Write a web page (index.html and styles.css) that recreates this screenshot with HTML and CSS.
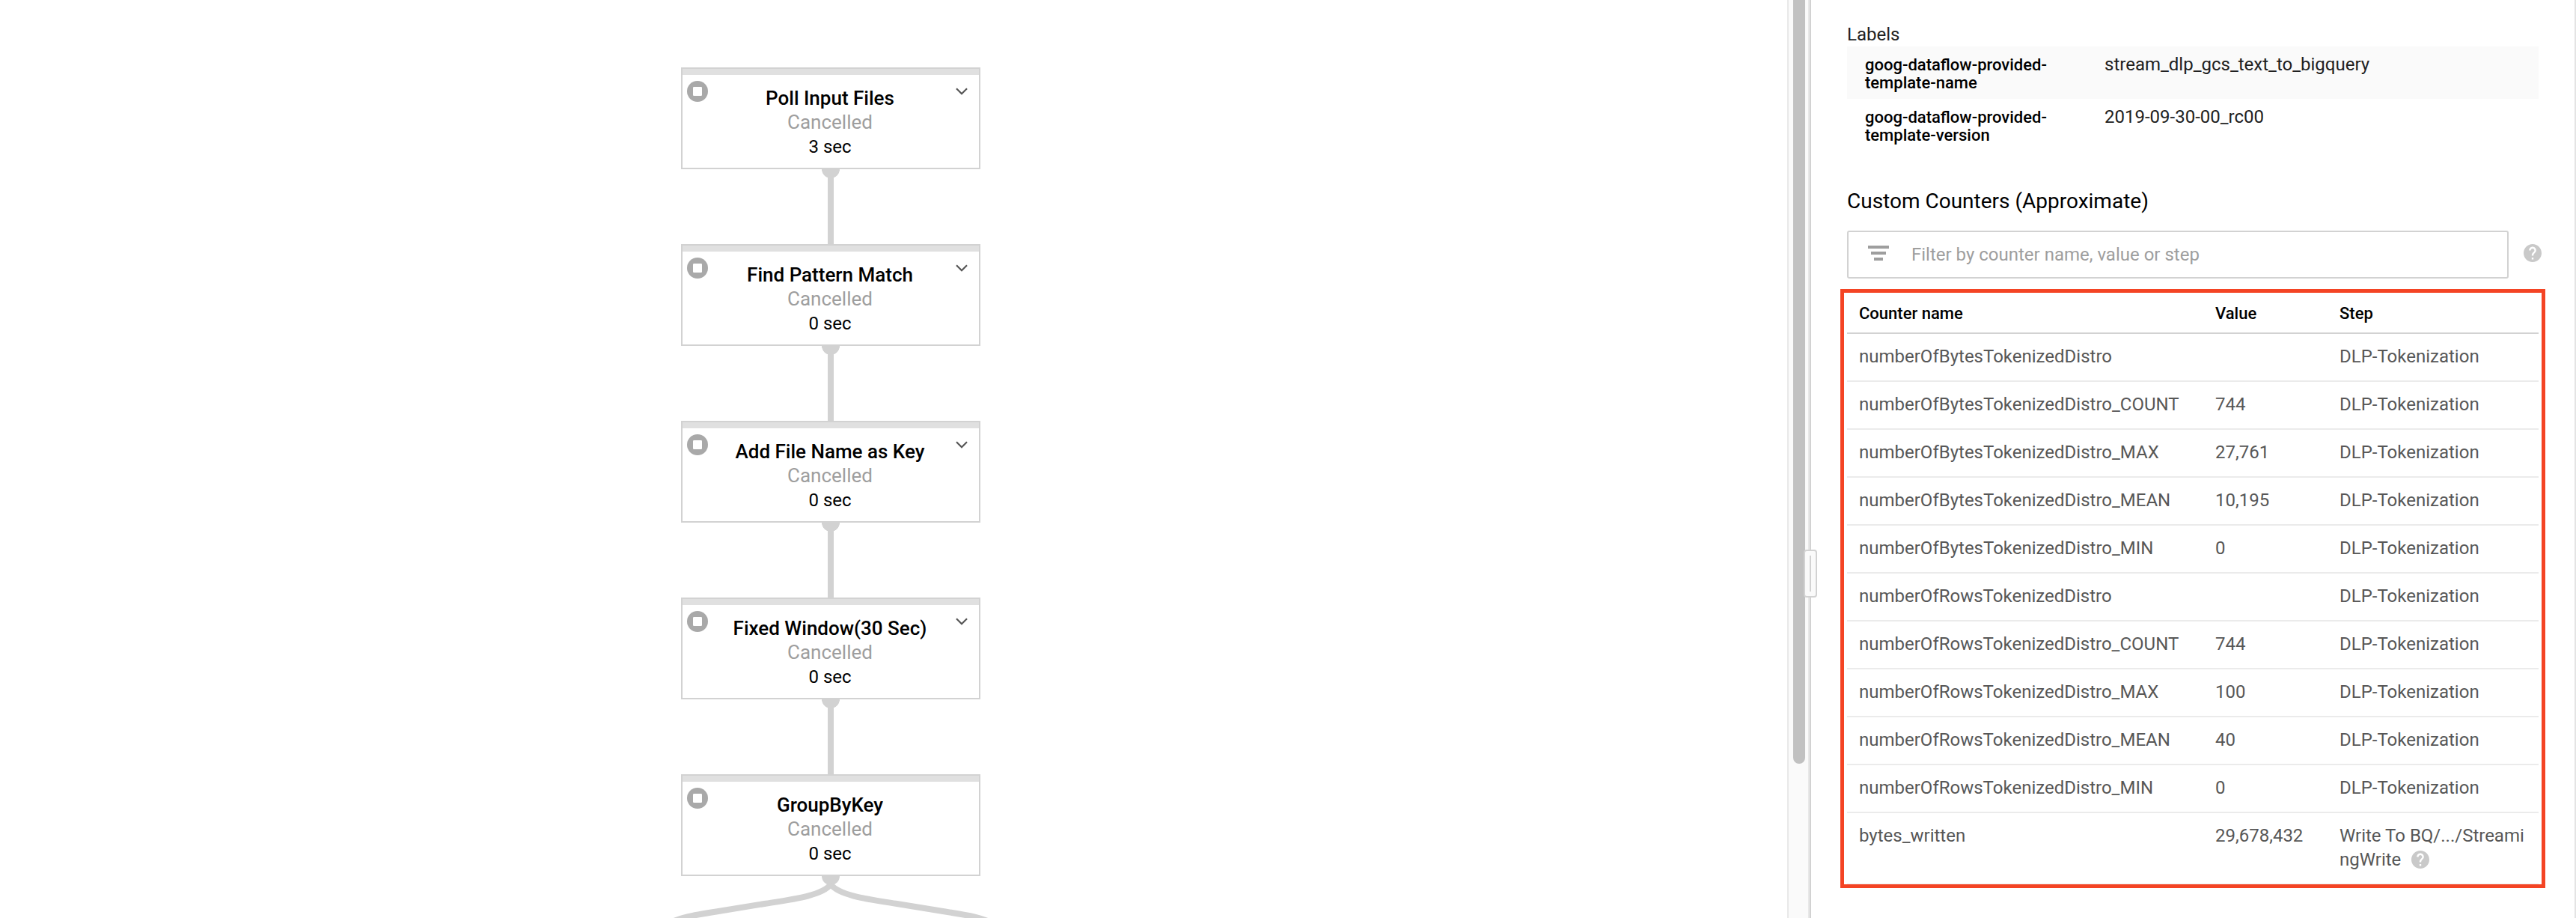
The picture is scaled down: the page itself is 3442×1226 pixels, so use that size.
FILE: index.html
```html
<!DOCTYPE html>
<html lang="en">
<head>
<meta charset="utf-8">
<title>Dataflow job</title>
<link rel="stylesheet" href="styles.css">
</head>
<body>
<svg class="defs" width="0" height="0" aria-hidden="true">
  <symbol id="stopped" viewBox="0 0 28 28"><circle cx="14" cy="14" r="14" fill="#a9a9a9"/><rect x="8" y="8" width="12" height="12" rx="1.3" fill="#fff"/></symbol>
  <symbol id="chevron" viewBox="0 0 16 10"><path d="M1 1.3 8 8.2 15 1.3" fill="none" stroke="#555" stroke-width="2.2"/></symbol>
  <symbol id="help" viewBox="2 2 20 20"><path fill="#c9c9c9" d="M12 2C6.48 2 2 6.48 2 12s4.48 10 10 10 10-4.48 10-10S17.52 2 12 2zm1 17h-2v-2h2v2zm2.07-7.75l-.9.92C13.45 12.9 13 13.5 13 15h-2v-.5c0-1.1.45-2.1 1.17-2.83l1.24-1.26c.37-.36.59-.86.59-1.41 0-1.1-.9-2-2-2s-2 .9-2 2H8c0-2.21 1.79-4 4-4s4 1.79 4 4c0 .88-.36 1.68-.93 2.25z"/></symbol>
</svg>
<div class="app">
  <main class="graph">
    <section class="node"><svg class="status"><use href="#stopped"/></svg><div class="info"><h3>Poll Input Files</h3><p class="state">Cancelled</p><p class="time">3 sec</p></div><svg class="chevron"><use href="#chevron"/></svg></section>
    <div class="link"></div>
    <section class="node"><svg class="status"><use href="#stopped"/></svg><div class="info"><h3>Find Pattern Match</h3><p class="state">Cancelled</p><p class="time">0 sec</p></div><svg class="chevron"><use href="#chevron"/></svg></section>
    <div class="link"></div>
    <section class="node"><svg class="status"><use href="#stopped"/></svg><div class="info"><h3>Add File Name as Key</h3><p class="state">Cancelled</p><p class="time">0 sec</p></div><svg class="chevron"><use href="#chevron"/></svg></section>
    <div class="link"></div>
    <section class="node"><svg class="status"><use href="#stopped"/></svg><div class="info"><h3>Fixed Window(30 Sec)</h3><p class="state">Cancelled</p><p class="time">0 sec</p></div><svg class="chevron"><use href="#chevron"/></svg></section>
    <div class="link"></div>
    <section class="node"><svg class="status"><use href="#stopped"/></svg><div class="info"><h3>GroupByKey</h3><p class="state">Cancelled</p><p class="time">0 sec</p></div></section>
    <svg class="fork" width="460" height="56" viewBox="880 1170 460 56">
      <path d="M1098 1170a12 12 0 0 0 24 0z" fill="#d2d2d2"/>
      <path d="M1110 1181C1099 1196 1060 1201 1023 1206.7L957 1217.5C925 1222.5 905 1226 893 1234M1110 1181C1121 1196 1160 1201 1197 1206.7L1263 1217.5C1295 1222.5 1315 1226 1327 1234" fill="none" stroke="#d2d2d2" stroke-width="8"/>
    </svg>
  </main>
  <div class="scrollbar"><div class="thumb"></div></div>
  <div class="divider"><div class="handle"></div></div>
  <aside class="panel">
    <h4 class="labels-title">Labels</h4>
    <dl class="labels">
      <div class="label"><dt>goog-dataflow-provided-template-name</dt><dd>stream_dlp_gcs_text_to_bigquery</dd></div>
      <div class="label"><dt>goog-dataflow-provided-template-version</dt><dd>2019-09-30-00_rc00</dd></div>
    </dl>
    <h2 class="counters-title">Custom Counters (Approximate)</h2>
    <div class="filter-row">
      <div class="filter"><svg class="filter-icon" viewBox="0 0 28 20"><path d="M0 0h28v4H0zM4 8h20v4H4zM8 16h12v4H8z" fill="#9e9e9e"/></svg><span>Filter by counter name, value or step</span></div>
      <svg class="help"><use href="#help"/></svg>
    </div>
    <div class="highlight">
      <div class="table">
        <div class="row head"><span>Counter name</span><span>Value</span><span>Step</span></div>
        <div class="row"><span>numberOfBytesTokenizedDistro</span><span></span><span>DLP-Tokenization</span></div>
        <div class="row"><span>numberOfBytesTokenizedDistro_COUNT</span><span>744</span><span>DLP-Tokenization</span></div>
        <div class="row"><span>numberOfBytesTokenizedDistro_MAX</span><span>27,761</span><span>DLP-Tokenization</span></div>
        <div class="row"><span>numberOfBytesTokenizedDistro_MEAN</span><span>10,195</span><span>DLP-Tokenization</span></div>
        <div class="row"><span>numberOfBytesTokenizedDistro_MIN</span><span>0</span><span>DLP-Tokenization</span></div>
        <div class="row"><span>numberOfRowsTokenizedDistro</span><span></span><span>DLP-Tokenization</span></div>
        <div class="row"><span>numberOfRowsTokenizedDistro_COUNT</span><span>744</span><span>DLP-Tokenization</span></div>
        <div class="row"><span>numberOfRowsTokenizedDistro_MAX</span><span>100</span><span>DLP-Tokenization</span></div>
        <div class="row"><span>numberOfRowsTokenizedDistro_MEAN</span><span>40</span><span>DLP-Tokenization</span></div>
        <div class="row"><span>numberOfRowsTokenizedDistro_MIN</span><span>0</span><span>DLP-Tokenization</span></div>
        <div class="row last"><span>bytes_written</span><span>29,678,432</span><span>Write To BQ/.../Streami<br>ngWrite <svg class="help"><use href="#help"/></svg></span></div>
      </div>
    </div>
  </aside>
</div>
</body>
</html>
```

FILE: styles.css
```css
* { box-sizing: border-box; }
body { margin: 0; background: #fff; color: #000; font-family: Roboto, sans-serif; font-size: 24px; overflow: hidden; }
h2, h3, h4, p, dl, dd { margin: 0; }
svg { display: block; flex: none; }
.defs { position: absolute; }
.app { display: flex; width: 3442px; height: 1226px; overflow: hidden; }

.graph { display: flex; flex-direction: column; align-items: center; width: 2388px; padding: 90px 168px 0 0; flex: none; }
.node { display: grid; grid-template-columns: 28px 1fr 28px; width: 400px; height: 136px; flex: none; padding: 8px 8px 0 6px; border: 2px solid #d2d2d2; background: linear-gradient(#e0e0e0 8px, #fff 8px); }
.status { width: 28px; height: 28px; margin-top: 8px; }
.chevron { width: 16px; height: 10px; margin: 17px 0 0 5px; }
.info { padding-top: 15px; text-align: center; line-height: 32px; font-size: 26px; white-space: nowrap; }
.info h3 { font-size: 26px; font-weight: 500; }
.state { color: #9e9e9e; }
.time { padding-top: 1px; font-size: 24px; }
.link { flex: none; width: 24px; height: 100px; background: radial-gradient(circle at 12px 0, #d2d2d2 11.6px, transparent 12.2px), linear-gradient(#d2d2d2, #d2d2d2) 50% 0 / 8px 100% no-repeat; }
.fork { flex: none; }

.scrollbar { flex: none; width: 30px; padding-left: 6px; border: solid #e8e8e8; border-width: 0 2px; background: #fafafa; }
.thumb { width: 16px; height: 1020px; border-radius: 0 0 8px 8px; background: #c1c1c1; }
.divider { position: relative; flex: none; width: 2px; background: #d2d2d2; }
.handle { position: absolute; left: -8px; top: 734px; width: 18px; height: 64px; border: 2px solid #d2d2d2; border-radius: 4px; background: linear-gradient(#d2d2d2, #d2d2d2) 6px 6px / 2px 48px no-repeat #fafafa; }

.panel { flex: 1; padding: 30px 39px 0 39px; border-right: 2px solid #e4e4e4; color: #212121; }
.labels-title { padding-left: 9px; font-size: 24px; line-height: 32px; font-weight: 400; }
.labels { margin: 0 9px; }
.label { display: grid; grid-template-columns: 320px 1fr; height: 70px; padding: 11px 24px; line-height: 24px; }
.label:first-child { background: #fafafa; }
.label dt { width: 250px; padding-top: 2px; color: #000; font-size: 22px; font-weight: 500; }
.label dd { padding-top: 2px; line-height: 22px; }
.counters-title { margin: 51px 9px 0; font-size: 28px; font-weight: 400; line-height: 32px; color: #000; }
.filter-row { display: flex; align-items: center; justify-content: space-between; margin: 23px 5px 14px 9px; }
.filter { display: flex; align-items: center; width: 884px; height: 64px; padding: 0 26px; gap: 30px; border: 2px solid #d2d2d2; border-radius: 3px; color: #9e9e9e; }
.filter-icon { width: 28px; height: 20px; margin-top: -4px; }
.help { width: 24px; height: 24px; }
.filter-row .help { margin-top: -4px; }
.highlight { width: 942px; height: 800px; border: 5px solid #f44424; overflow: hidden; }
.table { margin: 0 4px; color: #575757; }
.row { display: grid; grid-template-columns: 476px 166px 1fr; height: 64px; padding: 14px 0 0 16px; border-bottom: 2px solid #ebebeb; line-height: 32px; white-space: nowrap; }
.row.head { height: 55px; padding-top: 12px; border-color: #d2d2d2; color: #000; font-size: 22px; font-weight: 500; }
.row.last { height: 96px; }
.row .help { display: inline-block; margin-left: 8px; vertical-align: -4px; }
```
